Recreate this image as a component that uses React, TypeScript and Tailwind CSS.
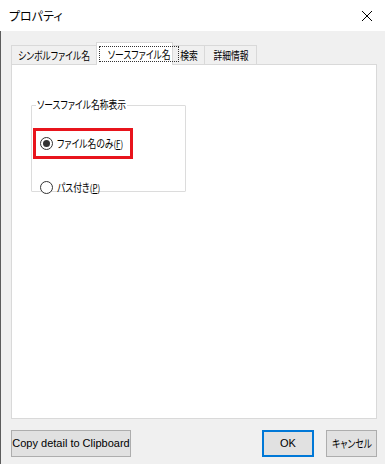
import React, { useState } from 'react';

const font = { fontFamily: '"Liberation Sans", "Noto Sans CJK JP", sans-serif' };
const jp = '[font-family:"Noto_Sans_CJK_JP",sans-serif] [font-feature-settings:"palt"]';

// Meiryo UI kana are narrow; squeeze Noto a bit to match widths
function J({ children, center }: { children: React.ReactNode; center?: boolean }) {
  return (
    <span
      className={`inline-block whitespace-nowrap scale-x-[0.8] ${center ? 'origin-center' : 'origin-left'} ${jp}`}
    >
      {children}
    </span>
  );
}

function Radio({ checked, label, mnemonic }: { checked: boolean; label: string; mnemonic: string }) {
  return (
    <div className="flex items-center gap-[4px] text-[11px] leading-none text-black whitespace-nowrap">
      <span className="w-[13px] h-[13px] rounded-full border border-[#333] bg-white flex items-center justify-center">
        {checked && <span className="w-[7px] h-[7px] rounded-full bg-[#333]" />}
      </span>
      <J>
        {label}
        <span className="text-[10px]">
          (<span className="underline">{mnemonic}</span>)
        </span>
      </J>
    </div>
  );
}

export default function App() {
  const [tab, setTab] = useState(1);
  const tabs = [
    { label: 'シンボルファイル名', w: 'w-[86px]' },
    { label: 'ソースファイル名', w: 'w-[77px]' },
    { label: '検索', w: 'w-[33px]' },
    { label: '詳細情報', w: 'w-[53px]' },
  ];

  return (
    <div className="w-[385px] h-[464px] flex flex-col bg-[#f0f0f0] overflow-hidden" style={font}>
      {/* Title bar */}
      <div className="h-[31px] bg-white flex items-center justify-between pl-[9px] pr-[11px]">
        <span className={`text-[12px] text-black ${jp}`}>プロパティ</span>
        <svg width="12" height="12" viewBox="0 0 12 12" className="mr-[1px]">
          <path d="M1 1L11 11M11 1L1 11" stroke="#000" strokeWidth="1" />
        </svg>
      </div>

      <div className="flex-1 flex flex-col border-l border-[#5c5c5c]">
        {/* Tabs */}
        <div className="mt-[11px] ml-[10px] h-[22px] flex items-end">
          {tabs.map((t, i) =>
            i === tab ? (
              <div
                key={t.label}
                className={`${t.w} h-[23px] px-[2px] pt-[3px] bg-white border border-b-0 border-[#d9d9d9] -mb-[1px] -ml-[1px] relative z-10 flex`}
              >
                <div className="flex-1 border border-dotted border-[#333] flex items-center justify-center text-[11px] leading-none h-[16px]">
                  <J center>{t.label}</J>
                </div>
              </div>
            ) : (
              <button
                key={t.label}
                onClick={() => setTab(i)}
                className={`${t.w} h-[19px] bg-[#f0f0f0] border border-b-0 border-[#d9d9d9] -ml-[1px] first:ml-0 text-[11px] leading-none text-black flex items-center justify-center`}
              >
                <J center>{t.label}</J>
              </button>
            )
          )}
        </div>

        {/* Panel */}
        <div className="flex-1 ml-[10px] mr-[8px] bg-white border border-[#d9d9d9] pt-[40px] pl-[19px]">
          <div className="relative w-[155px] h-[87px] border border-[#dcdcdc] rounded-[1px]">
            <span className="absolute -top-[7px] left-[4px] w-[91px] bg-white pl-[1px] text-[11px] leading-none text-black">
              <J>ソースファイル名称表示</J>
            </span>
            <div className="flex flex-col pl-[8px] pt-[31px] gap-[31px]">
              <div className="relative">
                <div className="absolute -left-[7px] -top-[9px] w-[100px] h-[31px] border-[3px] border-[#e8141c]" />
                <Radio checked label="ファイル名のみ" mnemonic="F" />
              </div>
              <Radio checked={false} label="パス付き" mnemonic="P" />
            </div>
          </div>
        </div>

        {/* Buttons */}
        <div className="h-[27px] mt-[11px] mb-[7px] flex ml-[10px] mr-[8px] text-[11px] text-black whitespace-nowrap">
          <button className="h-full w-[120px] bg-[#e1e1e1] border border-[#adadad]">
            Copy detail to Clipboard
          </button>
          <div className="flex-1" />
          <button className="h-full w-[52px] bg-[#e1e1e1] border-2 border-[#0078d7]">OK</button>
          <button className="h-full w-[51px] ml-[12px] bg-[#e1e1e1] border border-[#adadad] flex items-center justify-center">
            <J center>キャンセル</J>
          </button>
        </div>
      </div>
    </div>
  );
}
